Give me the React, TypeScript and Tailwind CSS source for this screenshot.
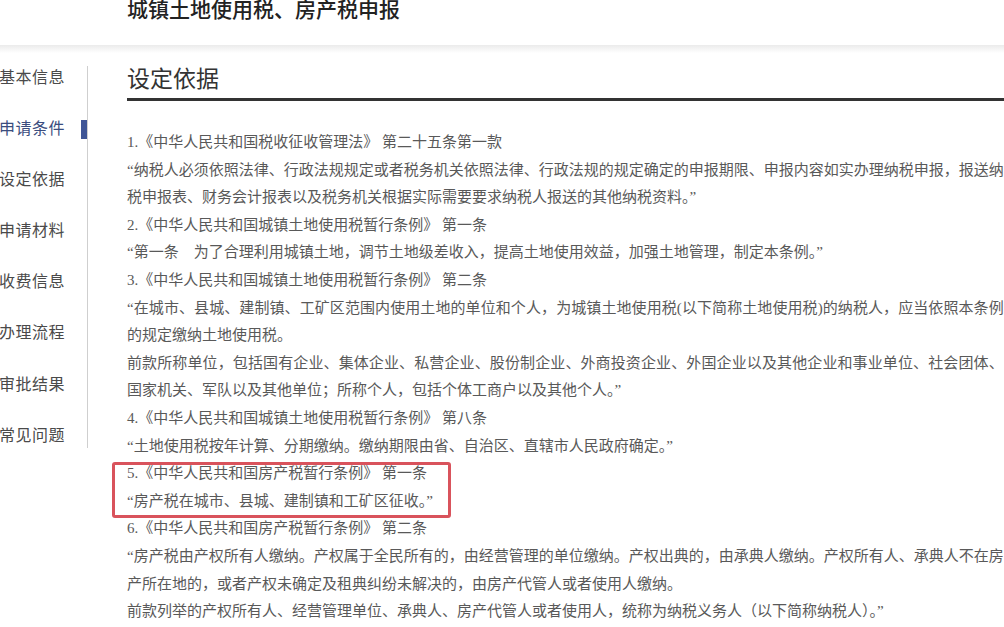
import React from "react";

const navItems = ["基本信息", "申请条件", "设定依据", "申请材料", "收费信息", "办理流程", "审批结果", "常见问题"];

// each entry is one visual line; full = stretch to the right edge
type Line = { text: string; full?: boolean };

const before: Line[] = [
  { text: "1.《中华人民共和国税收征收管理法》 第二十五条第一款" },
  { text: "“纳税人必须依照法律、行政法规规定或者税务机关依照法律、行政法规的规定确定的申报期限、申报内容如实办理纳税申报，报送纳", full: true },
  { text: "税申报表、财务会计报表以及税务机关根据实际需要要求纳税人报送的其他纳税资料。”" },
  { text: "2.《中华人民共和国城镇土地使用税暂行条例》 第一条" },
  { text: "“第一条　为了合理利用城镇土地，调节土地级差收入，提高土地使用效益，加强土地管理，制定本条例。”" },
  { text: "3.《中华人民共和国城镇土地使用税暂行条例》 第二条" },
  { text: "“在城市、县城、建制镇、工矿区范围内使用土地的单位和个人，为城镇土地使用税(以下简称土地使用税)的纳税人，应当依照本条例", full: true },
  { text: "的规定缴纳土地使用税。" },
  { text: "前款所称单位，包括国有企业、集体企业、私营企业、股份制企业、外商投资企业、外国企业以及其他企业和事业单位、社会团体、", full: true },
  { text: "国家机关、军队以及其他单位；所称个人，包括个体工商户以及其他个人。”" },
  { text: "4.《中华人民共和国城镇土地使用税暂行条例》 第八条" },
  { text: "“土地使用税按年计算、分期缴纳。缴纳期限由省、自治区、直辖市人民政府确定。”" },
];

const marked: Line[] = [
  { text: "5.《中华人民共和国房产税暂行条例》 第一条" },
  { text: "“房产税在城市、县城、建制镇和工矿区征收。”" },
];

const after: Line[] = [
  { text: "6.《中华人民共和国房产税暂行条例》 第二条" },
  { text: "“房产税由产权所有人缴纳。产权属于全民所有的，由经营管理的单位缴纳。产权出典的，由承典人缴纳。产权所有人、承典人不在房", full: true },
  { text: "产所在地的，或者产权未确定及租典纠纷未解决的，由房产代管人或者使用人缴纳。" },
  { text: "前款列举的产权所有人、经营管理单位、承典人、房产代管人或者使用人，统称为纳税义务人（以下简称纳税人）。”" },
];

function TextLine({ line }: { line: Line }) {
  return (
    <div
      className={
        line.full
          ? "whitespace-nowrap text-justify [text-align-last:justify]"
          : "whitespace-nowrap"
      }
    >
      {line.text}
    </div>
  );
}

export default function App() {
  return (
    <div className="h-[627px] w-[1004px] overflow-hidden bg-white font-['Liberation_Serif','Noto_Sans_CJK_SC',serif] text-[#555]">
      <header className="flex h-[45px] items-start pl-[127px]">
        <h1 className="-mt-[2px] text-[21px] leading-[24px] font-medium text-[#222]">
          城镇土地使用税、房产税申报
        </h1>
      </header>
      <div className="h-[8px] bg-gradient-to-b from-[#ebebeb] to-white" />

      <div className="flex">
        <aside className="w-[88px] shrink-0 pt-[13px]">
          <ul className="flex flex-col gap-[27.1px] border-r border-[#cfcfcf]">
            {navItems.map((item) => {
              const active = item === "申请条件";
              return (
                <li
                  key={item}
                  className={`relative -ml-[1px] flex h-[24px] items-center text-[16px] tracking-[0.5px] ${
                    active ? "text-[#3b4d7e]" : "text-[#4a4a4a]"
                  }`}
                >
                  {item}
                  {active && (
                    <span className="absolute top-[2.5px] right-0 h-[19px] w-[6px] bg-[#3f5596]" />
                  )}
                </li>
              );
            })}
          </ul>
        </aside>

        <main className="flex-1 pr-[2px] pl-[39px]">
          <h2 className="mt-[12px] border-b-[3px] border-[#333] pb-[3px] text-[23px] leading-[30px] text-[#333]">
            设定依据
          </h2>

          <div className="mt-[28px] text-[15px] leading-[27.6px] text-[#595959]">
            {before.map((l, i) => (
              <TextLine key={`b${i}`} line={l} />
            ))}
            <div className="relative w-[324px]">
              {marked.map((l, i) => (
                <TextLine key={`m${i}`} line={l} />
              ))}
              <span className="pointer-events-none absolute top-[2px] right-0 -bottom-[3px] -left-[15px] rounded-[3px] border-[3px] border-[#d9535c]" />
            </div>
            {after.map((l, i) => (
              <TextLine key={`a${i}`} line={l} />
            ))}
          </div>
        </main>
      </div>
    </div>
  );
}
